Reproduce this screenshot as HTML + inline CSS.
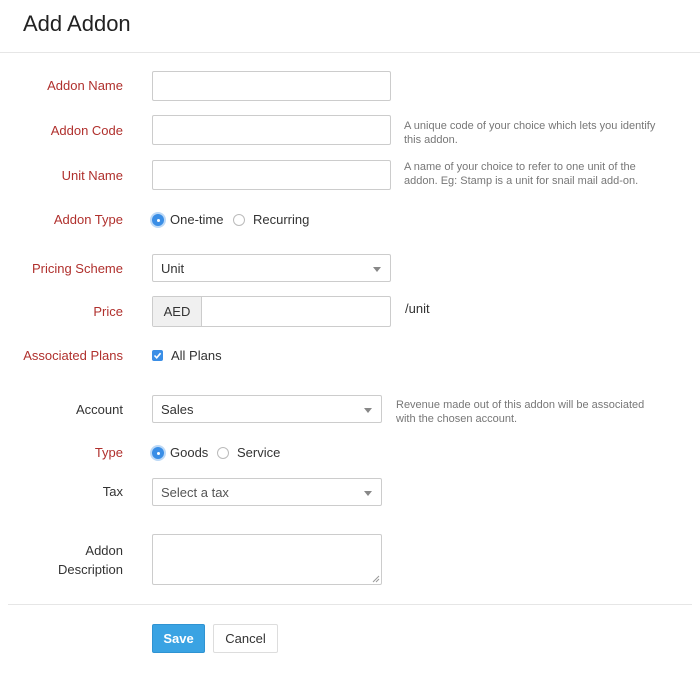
<!DOCTYPE html>
<html><head><style>
body{margin:0;width:700px;height:675px;background:#fff;font-family:"Liberation Sans",sans-serif;font-size:13px;color:#333;position:relative;overflow:hidden}
.a{position:absolute}
.lbl{position:absolute;right:577px;color:#b0302d;white-space:nowrap;line-height:16px}
.lbl.k{color:#333}
.in{position:absolute;border:1px solid #ccc;border-radius:2px;box-sizing:border-box;background:#fff}
.help{position:absolute;font-size:11px;color:#777;line-height:14px}
.caret{position:absolute;right:9px;top:12px;width:0;height:0;border-left:4px solid transparent;border-right:4px solid transparent;border-top:5px solid #888}
.sel{padding:6px 0 0 8px;line-height:16px}
.radio{position:absolute;width:12px;height:12px;border:1px solid #bbb;border-radius:50%;box-sizing:border-box;background:#fff}
.radio.on{background:#3a8ee6;border-color:#3a8ee6;box-shadow:0 0 0 2px #bcd9f7}
.radio.on:after{content:"";position:absolute;left:3.5px;top:3.5px;width:3px;height:3px;border-radius:50%;background:#fff}
</style></head><body>
<div class="a" style="left:23px;top:11px;font-size:22px;color:#222">Add Addon</div>
<div class="a" style="left:0;top:52px;width:700px;border-top:1px solid #e6e6e6"></div>

<div class="lbl" style="top:78px">Addon Name</div>
<div class="in" style="left:152px;top:71px;width:239px;height:30px"></div>

<div class="lbl" style="top:123px">Addon Code</div>
<div class="in" style="left:152px;top:115px;width:239px;height:30px"></div>
<div class="help" style="left:404px;top:119px">A unique code of your choice which lets you identify<br>this addon.</div>

<div class="lbl" style="top:168px">Unit Name</div>
<div class="in" style="left:152px;top:160px;width:239px;height:30px"></div>
<div class="help" style="left:404px;top:160px">A name of your choice to refer to one unit of the<br>addon. Eg: Stamp is a unit for snail mail add-on.</div>

<div class="lbl" style="top:212px">Addon Type</div>
<div class="radio on" style="left:152px;top:214px"></div>
<div class="a" style="left:170px;top:212px">One-time</div>
<div class="radio" style="left:233px;top:214px"></div>
<div class="a" style="left:253px;top:212px">Recurring</div>

<div class="lbl" style="top:261px">Pricing Scheme</div>
<div class="in sel" style="left:152px;top:254px;width:239px;height:28px">Unit<div class="caret"></div></div>

<div class="lbl" style="top:304px">Price</div>
<div class="in" style="left:152px;top:296px;width:239px;height:31px"></div>
<div class="a" style="left:153px;top:297px;width:48px;height:29px;background:#f0f0f0;border-right:1px solid #ccc;text-align:center;line-height:29px">AED</div>
<div class="a" style="left:405px;top:301px">/unit</div>

<div class="lbl" style="top:348px">Associated Plans</div>
<div class="a" style="left:152px;top:350px;width:11px;height:11px;background:#3a8ee6;border-radius:2px"><svg width="11" height="11" style="position:absolute;left:0;top:0"><path d="M2.5 5.5 L4.7 7.8 L8.6 3.2" stroke="#fff" stroke-width="1.6" fill="none"/></svg></div>
<div class="a" style="left:171px;top:348px">All Plans</div>

<div class="lbl k" style="top:402px">Account</div>
<div class="in sel" style="left:152px;top:395px;width:230px;height:28px">Sales<div class="caret"></div></div>
<div class="help" style="left:396px;top:398px">Revenue made out of this addon will be associated<br>with the chosen account.</div>

<div class="lbl" style="top:445px">Type</div>
<div class="radio on" style="left:152px;top:447px"></div>
<div class="a" style="left:170px;top:445px">Goods</div>
<div class="radio" style="left:217px;top:447px"></div>
<div class="a" style="left:237px;top:445px">Service</div>

<div class="lbl k" style="top:484px">Tax</div>
<div class="in sel" style="left:152px;top:478px;width:230px;height:28px;color:#555">Select a tax<div class="caret"></div></div>

<div class="lbl k" style="top:541px;text-align:right;line-height:19px">Addon<br>Description</div>
<div class="in" style="left:152px;top:534px;width:230px;height:51px"><svg width="8" height="8" style="position:absolute;right:1px;bottom:1px"><path d="M1 7L7 1M4 7L7 4" stroke="#999" stroke-width="1"/></svg></div>

<div class="a" style="left:8px;top:604px;width:684px;border-top:1px solid #e6e6e6"></div>
<div class="a" style="left:152px;top:624px;width:53px;height:29px;background:#3aa3e3;border:1px solid #2f93d2;box-sizing:border-box;border-radius:2px;color:#fff;font-weight:bold;text-align:center;line-height:27px">Save</div>
<div class="a" style="left:213px;top:624px;width:65px;height:29px;border:1px solid #ddd;box-sizing:border-box;border-radius:2px;text-align:center;line-height:27px">Cancel</div>
</body></html>
